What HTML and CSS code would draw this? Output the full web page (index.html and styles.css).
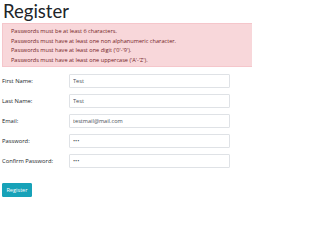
FILE: index.html
```html
<!DOCTYPE html>
<html>
<head>
<meta charset="utf-8">
<link rel="stylesheet" href="styles.css">
</head>
<body>
<div class="page">
  <h2 class="title">Register</h2>
  <div class="alert">
    <div>Passwords must be at least 6 characters.</div>
    <div>Passwords must have at least one non alphanumeric character.</div>
    <div>Passwords must have at least one digit ('0'-'9').</div>
    <div>Passwords must have at least one uppercase ('A'-'Z').</div>
  </div>
  <form class="form">
    <div class="row"><label class="label">First Name:</label><input class="field" type="text" value="Test"></div>
    <div class="row"><label class="label">Last Name:</label><input class="field" type="text" value="Test"></div>
    <div class="row"><label class="label">Email:</label><input class="field" type="text" value="testmail@mail.com"></div>
    <div class="row"><label class="label">Password:</label><input class="field" type="password" value="abc"></div>
    <div class="row"><label class="label">Confirm Password:</label><input class="field" type="password" value="abc"></div>
    <div class="actions"><button class="btn" type="button">Register</button></div>
  </form>
</div>
</body>
</html>
```
FILE: styles.css
```css
html, body {
  margin: 0;
  padding: 0;
  background: #ffffff;
}
.page {
  width: 250px;
  padding: 0 0 0 2px;
  font-family: "Open Sans", "Noto Sans", sans-serif;
  color: #212529;
  overflow: hidden;
}
.title {
  margin: 0;
  padding: 0 0 0 1px;
  height: 23px;
  font-family: Lato, "Open Sans", sans-serif;
  font-size: 18.5px;
  line-height: 22px;
  font-weight: 400;
  color: #212529;
}
.alert {
  height: 44px;
  box-sizing: border-box;
  padding: 3px 8px;
  background: #f8d7da;
  border: 1px solid #f5c6cb;
  border-right: none;
  color: #721c24;
  font-size: 5.6px;
  line-height: 9.5px;
}
.form {
  margin: 7px 0 0;
  display: flex;
  flex-direction: column;
  gap: 6px;
}
.row {
  display: flex;
  align-items: center;
  height: 14px;
}
.label {
  width: 67px;
  font-size: 5.8px;
  color: #212529;
}
.field {
  box-sizing: border-box;
  width: 161px;
  height: 14px;
  margin: 0;
  padding: 0 3px;
  border: 1px solid #dfe2e6;
  border-radius: 1px;
  font-family: "Open Sans", "Noto Sans", sans-serif;
  font-size: 5.6px;
  color: #495057;
  background: #fff;
  outline: none;
}
.actions {
  display: flex;
  margin-top: 9px;
}
.btn {
  box-sizing: border-box;
  width: 30px;
  height: 14px;
  margin: 0;
  padding: 0;
  border: 1px solid #17a2b8;
  border-radius: 1px;
  background: #17a2b8;
  color: #ffffff;
  font-family: "Open Sans", "Noto Sans", sans-serif;
  font-size: 5.6px;
}
```
